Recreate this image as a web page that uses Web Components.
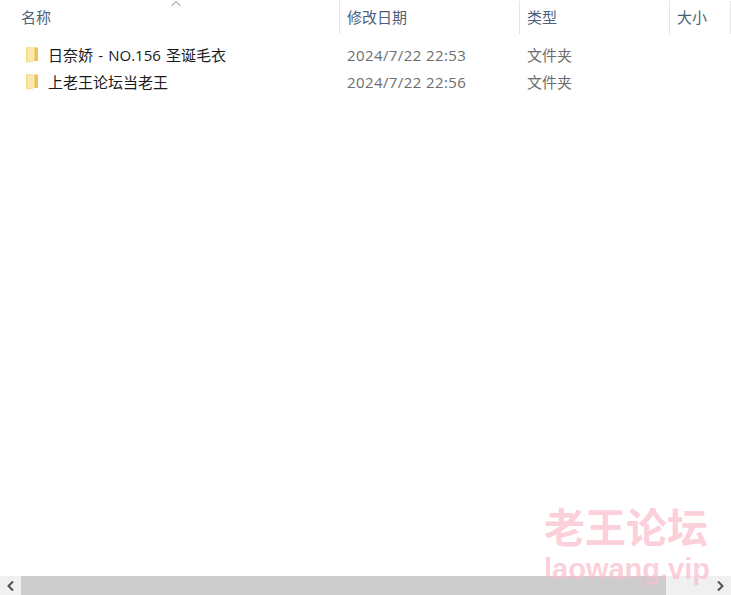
<!DOCTYPE html>
<html lang="zh"><head><meta charset="utf-8"><title>文件夹</title>
<style>
html,body{margin:0;padding:0;height:100%;background:#fff;overflow:hidden}
body{font-family:"Open Sans","Noto Sans CJK SC",sans-serif}
</style></head><body>
<file-window>
  <col-header slot="head" label="名称" w="340" sorted></col-header>
  <col-header slot="head" label="修改日期" w="180"></col-header>
  <col-header slot="head" label="类型" w="150"></col-header>
  <col-header slot="head" label="大小" w="61"></col-header>
  <file-row name="日奈娇 - NO.156 圣诞毛衣" date="2024/7/22 22:53" kind="文件夹"></file-row>
  <file-row name="上老王论坛当老王" date="2024/7/22 22:56" kind="文件夹"></file-row>
  <h-scrollbar slot="bar"></h-scrollbar>
  <water-mark slot="mark"></water-mark>
</file-window>
<script>
function def(name,html,init){
  customElements.define(name,class extends HTMLElement{
    connectedCallback(){
      if(this.shadowRoot)return;
      const s=this.attachShadow({mode:'open'});
      s.innerHTML=html;
      if(init)init(this,s);
    }
  });
}
def('file-window',`<style>
:host{display:flex;flex-direction:column;position:relative;width:731px;height:595px;overflow:hidden;background:#fff}
.head{display:flex;height:33px;flex:none;margin-top:1px}
.rows{flex:1;display:flex;flex-direction:column;padding-top:8px}
.mark{position:absolute;left:544px;top:506px}
</style>
<div class="head"><slot name="head"></slot></div>
<div class="rows"><slot></slot></div>
<slot name="bar"></slot>
<div class="mark"><slot name="mark"></slot></div>`);
def('col-header',`<style>
:host{display:flex;align-items:center;box-sizing:border-box;position:relative;height:33px;font-size:15px;color:#4c607a;line-height:33px;border-right:1px solid #e5e5e5}
:host(:last-child){border-right:0}
span{display:block;white-space:nowrap;margin-top:0}
svg{position:absolute;left:170px;top:-1px}
</style><span></span>`,(h,s)=>{
  s.querySelector('span').textContent=h.getAttribute('label');
  h.style.width=h.getAttribute('w')+'px';
  h.style.paddingLeft=(h.hasAttribute('sorted')?21:7)+'px';
  if(h.hasAttribute('sorted'))s.innerHTML+='<svg width="12" height="7" viewBox="0 0 12 7"><path d="M1.5 6 L6 1.5 L10.5 6" fill="none" stroke="#7a7a7a" stroke-width="1"/></svg>';
});
def('file-row',`<style>
:host{display:flex;align-items:center;height:27px;font-size:15px;line-height:27px;color:#6d6d6d}
.c1{display:flex;align-items:center;width:347px;box-sizing:border-box;padding-left:26px;flex:none}
.n{color:#1a1a1a;margin-left:10px;white-space:nowrap;word-spacing:1.3px}
.c2{width:180px;flex:none;white-space:nowrap;letter-spacing:.4px}
.c3{white-space:nowrap}
svg{flex:none;margin-top:-3px}
</style>
<div class="c1"><svg width="12" height="17" viewBox="0 0 12 17">
<path d="M0 1h6.5l1 1V15.6L1 16.6 0 16z" fill="#f5d77f"/>
<path d="M1.5 1.5H12V15H1.5z" fill="#fbe08f"/>
<path d="M1.5 1.5h7V15H3l-1.5 1.5z" fill="#f9e9b0"/>
<path d="M8.5 1.5H12V15H8.5z" fill="#edc25b"/>
</svg><span class="n"></span></div>
<div class="c2"></div><div class="c3"></div>`,(h,s)=>{
  s.querySelector('.n').textContent=h.getAttribute('name');
  s.querySelector('.c2').textContent=h.getAttribute('date');
  s.querySelector('.c3').textContent=h.getAttribute('kind');
});
def('h-scrollbar',`<style>
:host{display:flex;flex:none;height:19px;background:#f0f0f0}
.b{width:21px;display:flex;align-items:center;justify-content:center;flex:none}
.t{width:645px;background:#cdcdcd;flex:none}
.s{flex:1}
</style>
<div class="b"><svg width="9" height="12" viewBox="0 0 9 12"><path d="M7 1.5 2.5 6 7 10.5" fill="none" stroke="#505050" stroke-width="2"/></svg></div>
<div class="t"></div><div class="s"></div>
<div class="b"><svg width="9" height="12" viewBox="0 0 9 12"><path d="M2 1.5 6.5 6 2 10.5" fill="none" stroke="#505050" stroke-width="2"/></svg></div>`);
def('water-mark',`<style>
:host{display:block;color:rgba(250,190,205,.72);white-space:nowrap;pointer-events:none}
.a{font-size:41px;line-height:47px;font-family:"Liberation Sans","Noto Sans CJK SC",sans-serif;font-weight:700}
.b{font-size:29px;line-height:33px;font-family:"Liberation Sans",sans-serif;font-weight:700}
</style><div class="a">老王论坛</div><div class="b">laowang.vip</div>`);
</script>
</body></html>
